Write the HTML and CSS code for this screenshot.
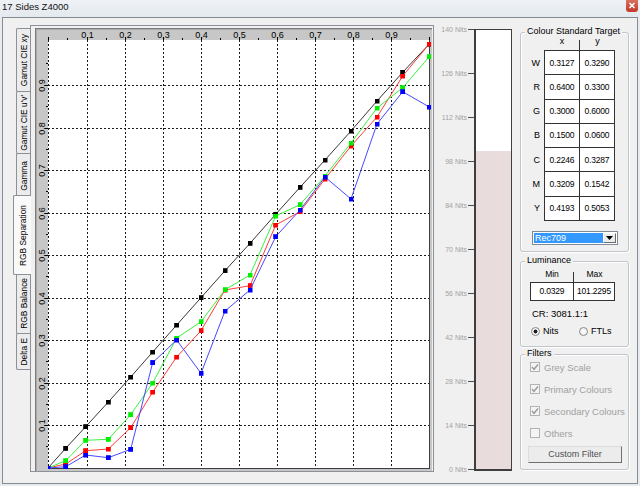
FILE: index.html
```html
<!DOCTYPE html>
<html>
<head>
<meta charset="utf-8">
<link rel="stylesheet" href="styles.css">
</head>
<body>
<div class="titlebar">
  <span class="title">17 Sides Z4000</span>
  <span class="close"><svg width="12" height="12" viewBox="0 0 12 12"><path class="close-x" d="M3.5 3 L8.5 8 M8.5 3 L3.5 8"/></svg></span>
</div>
<div class="window">
  <div class="tabs">
    <div class="tab t1"><span>Gamut CIE xy</span></div>
    <div class="tab t2"><span>Gamut CIE u'v'</span></div>
    <div class="tab t3"><span>Gamma</span></div>
    <div class="tab sel"><span>RGB Separation</span></div>
    <div class="tab t5"><span>RGB Balance</span></div>
    <div class="tab t6"><span>Delta E</span></div>
  </div>
  <div class="page">
    <svg class="chart" width="397" height="443" viewBox="0 0 397 443">
      <defs>
        <clipPath id="plot"><rect x="13" y="12" width="383" height="429"/></clipPath>
        <marker id="mk" markerWidth="5" markerHeight="5" refX="2.5" refY="2.5" markerUnits="userSpaceOnUse"><rect width="5" height="5" class="m-k"/></marker>
        <marker id="mr" markerWidth="5" markerHeight="5" refX="2.5" refY="2.5" markerUnits="userSpaceOnUse"><rect width="5" height="5" class="m-r"/></marker>
        <marker id="mg" markerWidth="5" markerHeight="5" refX="2.5" refY="2.5" markerUnits="userSpaceOnUse"><rect width="5" height="5" class="m-g"/></marker>
        <marker id="mb" markerWidth="5" markerHeight="5" refX="2.5" refY="2.5" markerUnits="userSpaceOnUse"><rect width="5" height="5" class="m-b"/></marker>
      </defs>
      <rect class="ruler" width="397" height="443"/>
      <path class="bevel1" d="M0 0.5H397M0.5 0V443"/>
      <path class="bevel2" d="M1 1.5H397M1.5 1V443"/>
      <rect class="plotbg" x="13" y="12" width="382" height="429"/>
      <path class="grid" d="M13.5 12V440M52.5 12V440M90.5 12V440M128.5 12V440M166.5 12V440M204.5 12V440M242.5 12V440M280.5 12V440M318.5 12V440M356.5 12V440"/>
      <path class="grid" d="M13 57.5H394M13 100.5H394M13 142.5H394M13 185.5H394M13 227.5H394M13 270.5H394M13 312.5H394M13 355.5H394M13 397.5H394"/>
      <path class="edge" d="M394.5 12V441M13 440.5H395"/>
      <path class="tick" d="M13.5 9V12M52.5 9V12M90.5 9V12M128.5 9V12M166.5 9V12M204.5 9V12M242.5 9V12M280.5 9V12M318.5 9V12M356.5 9V12M394.5 9V12M32.5 10V12M71.5 10V12M109.5 10V12M147.5 10V12M185.5 10V12M223.5 10V12M261.5 10V12M299.5 10V12M337.5 10V12M375.5 10V12"/>
      <path class="tick" d="M10 57.5H13M10 100.5H13M10 142.5H13M10 185.5H13M10 227.5H13M10 270.5H13M10 312.5H13M10 355.5H13M10 397.5H13M11 35.5H13M11 78.5H13M11 121.5H13M11 163.5H13M11 206.5H13M11 248.5H13M11 291.5H13M11 333.5H13M11 376.5H13M11 418.5H13"/>
      <g class="xl">
        <text x="52.5" y="10">0,1</text>
        <text x="90.5" y="10">0,2</text>
        <text x="128.5" y="10">0,3</text>
        <text x="166.5" y="10">0,4</text>
        <text x="204.5" y="10">0,5</text>
        <text x="242.5" y="10">0,6</text>
        <text x="280.5" y="10">0,7</text>
        <text x="318.5" y="10">0,8</text>
        <text x="356.5" y="10">0,9</text>
      </g>
      <g class="yl">
        <text transform="translate(10 57.5) rotate(-90)">0,9</text>
        <text transform="translate(10 100.5) rotate(-90)">0,8</text>
        <text transform="translate(10 142.5) rotate(-90)">0,7</text>
        <text transform="translate(10 185.5) rotate(-90)">0,6</text>
        <text transform="translate(10 227.5) rotate(-90)">0,5</text>
        <text transform="translate(10 270.5) rotate(-90)">0,4</text>
        <text transform="translate(10 312.5) rotate(-90)">0,3</text>
        <text transform="translate(10 355.5) rotate(-90)">0,2</text>
        <text transform="translate(10 397.5) rotate(-90)">0,1</text>
      </g>
      <g clip-path="url(#plot)">
        <polyline class="s-k" points="13,440 30.7,420.3 50.7,398.7 73.3,374 95.7,349 117.7,324 141.7,297 166,269.7 190,242.7 215,215.3 240.7,186.3 265,159.3 290,132 316,103 342,73 367.7,44.3 394.3,16"/>
        <polyline class="s-r" points="13,440 30.7,436 50.7,422.7 73.3,421 95.7,399.7 117.7,364 141.7,329 166,302.7 190,262 215,257.7 240.7,197 265,183.7 290,151 316,118 342,89 367.7,48 394.3,16"/>
        <polyline class="s-g" points="13,440 30.7,432.7 50.7,412.3 73.3,411.3 95.7,386.7 117.7,355 141.7,310 166,293.7 190,261.7 215,247 240.7,188 265,176.7 290,148 316,115 342,80 367.7,59.7 394.3,28.7"/>
        <polyline class="s-b" points="13,440 30.7,438.7 50.7,427 73.3,429.7 95.7,421.3 117.7,334.6 141.7,312 166,345.3 190,283 215,262 240.7,208.7 265,182 290,149 316,171 342,96 367.7,63.7 394.3,79"/>
      </g>
    </svg>
  </div>
  <div class="nits">
    <svg width="82" height="460" viewBox="0 0 82 460">
      <rect class="bar-border" x="40" y="11" width="38" height="442"/>
      <rect class="bar-empty" x="42" y="12" width="35" height="439"/>
      <rect class="bar-fill" x="42" y="133" width="35" height="318"/>
      <path class="ntick" d="M34 11.5H40M34 55.5H40M34 99.5H40M34 143.5H40M34 187.5H40M34 231.5H40M34 275.5H40M34 319.5H40M34 363.5H40M34 407.5H40M34 451.5H40"/>
      <g class="nl">
        <text x="33" y="14">140 Nits</text>
        <text x="33" y="58">126 Nits</text>
        <text x="33" y="102">112 Nits</text>
        <text x="33" y="146">98 Nits</text>
        <text x="33" y="190">84 Nits</text>
        <text x="33" y="234">70 Nits</text>
        <text x="33" y="278">56 Nits</text>
        <text x="33" y="322">42 Nits</text>
        <text x="33" y="366">28 Nits</text>
        <text x="33" y="410">14 Nits</text>
        <text x="33" y="454">0 Nits</text>
      </g>
    </svg>
  </div>
  <div class="side">
    <div class="group g-cst">
      <div class="legend">Colour Standard Target</div>
      <div class="cst-head"><span></span><span class="hx">x</span><span>y</span></div>
      <div class="cst-body">
        <div class="cst-labels"><span>W</span><span>R</span><span>G</span><span>B</span><span>C</span><span>M</span><span>Y</span></div>
        <div class="cst-grid">
          <span>0.3127</span><span>0.3290</span>
          <span>0.6400</span><span>0.3300</span>
          <span>0.3000</span><span>0.6000</span>
          <span>0.1500</span><span>0.0600</span>
          <span>0.2246</span><span>0.3287</span>
          <span>0.3209</span><span>0.1542</span>
          <span>0.4193</span><span>0.5053</span>
        </div>
      </div>
      <div class="select">
        <span class="sel-text">Rec709</span>
        <span class="sel-btn"><svg width="7" height="4" viewBox="0 0 7 4"><path class="arrow" d="M0 0H7L3.5 4Z"/></svg></span>
      </div>
    </div>
    <div class="group g-lum">
      <div class="legend">Luminance</div>
      <div class="lum-head"><span class="hx">Min</span><span>Max</span></div>
      <div class="lum-box"><span>0.0329</span><span>101.2295</span></div>
      <div class="cr">CR: 3081.1:1</div>
      <div class="radios">
        <div class="radio"><i class="on"></i><span>Nits</span></div>
        <div class="radio"><i></i><span>FTLs</span></div>
      </div>
    </div>
    <div class="group g-flt">
      <div class="legend">Filters</div>
      <div class="checks">
        <div class="check"><i><svg width="8" height="8" viewBox="0 0 8 8"><path class="tickmark" d="M1 4 L3 6.3 L7 1.5"/></svg></i><span>Grey Scale</span></div>
        <div class="check"><i><svg width="8" height="8" viewBox="0 0 8 8"><path class="tickmark" d="M1 4 L3 6.3 L7 1.5"/></svg></i><span>Primary Colours</span></div>
        <div class="check"><i><svg width="8" height="8" viewBox="0 0 8 8"><path class="tickmark" d="M1 4 L3 6.3 L7 1.5"/></svg></i><span>Secondary Colours</span></div>
        <div class="check"><i></i><span>Others</span></div>
      </div>
      <div class="btn">Custom Filter</div>
    </div>
  </div>
</div>
</body>
</html>
```
FILE: styles.css
```css
* { box-sizing: border-box; }
html, body { margin: 0; padding: 0; }
body {
  width: 640px; height: 486px; overflow: hidden;
  background: #e7ebf0;
  font-family: "Liberation Sans", Arial, sans-serif;
  font-size: 9px; color: #000;
}
.titlebar {
  height: 17px; display: flex; align-items: flex-start;
  background: linear-gradient(#eef1f5, #e4e9ef);
}
.title { font-size: 9.5px; line-height: 11px; padding: 1px 0 0 2px; color: #111; }
.close {
  margin-left: auto; margin-right: 2px; width: 12px; height: 12px;
  background: linear-gradient(#d9705f, #c2392a); border-radius: 0 0 3px 3px;
  display: flex;
}
.close-x { stroke: #fff; stroke-width: 1.6; fill: none; }

.window {
  margin-left: 2px; width: 636px; height: 467px;
  border: 1px solid #868b92; background: #f0f0f0;
  display: flex; align-items: flex-start;
}

/* tabs */
.tabs {
  width: 27px; flex: none; display: flex; flex-direction: column;
  align-items: flex-end; padding-top: 10px;
}
.tab {
  width: 14px; border: 1px solid #8c9097; border-right: 0; margin-bottom: -1px;
  background: #ececec; display: flex; align-items: center; justify-content: center;
  border-radius: 2px 0 0 2px; overflow: hidden;
}
.tab span {
  writing-mode: vertical-rl; transform: rotate(180deg);
  font-size: 8.4px; line-height: 10px; white-space: nowrap;
}
.t1 { height: 64px; }
.t2 { height: 63px; }
.t3 { height: 45px; }
.t5 { height: 62px; }
.t6 { height: 37px; }
.tab.sel {
  width: 18px; height: 80px; margin: -2px -1px -3px 0;
  background: #f9f9f9; position: relative; z-index: 1;
}

/* page / chart */
.page {
  width: 404px; height: 447px; margin-top: 7px; flex: none;
  border: 1px solid #8c9097; padding: 2px 1px 0 4px; background: #f0f0f0;
}
.chart { display: block; }
.ruler { fill: #c7c7c7; }
.bevel1 { stroke: #7c7c7c; fill: none; }
.bevel2 { stroke: #a9a9a9; fill: none; }
.plotbg { fill: #fff; }
.grid { fill: none; stroke: #1a1a1a; stroke-width: 1; stroke-dasharray: 2 2; }
.edge { fill: none; stroke: #3c3c3c; }
.tick { fill: none; stroke: #000; }
.xl text { font-size: 9px; text-anchor: middle; fill: #000; }
.yl text { font-size: 9px; text-anchor: middle; fill: #000; }
.s-k, .s-r, .s-g, .s-b { fill: none; stroke-width: 1; }
.s-k { stroke: #383838; marker-start: url(#mk); marker-mid: url(#mk); marker-end: url(#mk); }
.s-r { stroke: #ff3c3c; marker-start: url(#mr); marker-mid: url(#mr); marker-end: url(#mr); }
.s-g { stroke: #3cf03c; marker-start: url(#mg); marker-mid: url(#mg); marker-end: url(#mg); }
.s-b { stroke: #4848ff; marker-start: url(#mb); marker-mid: url(#mb); marker-end: url(#mb); }
.m-k { fill: #000; }
.m-r { fill: #f00; }
.m-g { fill: #00f000; }
.m-b { fill: #0000ff; }

/* nits bar */
.nits { width: 82px; flex: none; }
.nits svg { display: block; }
.bar-border { fill: #3e3e3e; }
.bar-empty { fill: #fff; }
.bar-fill { fill: #e8dcdc; }
.ntick { stroke: #4a4a4a; fill: none; }
.nl text { font-size: 7px; fill: #a2a2a2; text-anchor: end; }

/* side panel */
.side { width: 121px; flex: none; padding: 14px 0 0 4px; }
.group {
  width: 109px; border: 1px solid #bfc5cb; border-radius: 3px;
  box-shadow: inset 1px 1px 0 #fff, 1px 1px 0 #fff;
}
.legend {
  width: fit-content; margin: -7px 0 0 4px; padding: 0 2px;
  background: #f0f0f0; line-height: 11px; height: 11px; font-size: 9px;
}
.g-lum { margin-top: 9px; padding-bottom: 8px; }
.g-flt { margin-top: 7px; padding-bottom: 6px; }

.cst-head {
  display: grid; grid-template-columns: 23px 36px 35px;
  height: 13px; line-height: 9px; text-align: center; font-size: 9px;
}
.hx { background: linear-gradient(#333, #333) no-repeat right bottom / 1px 10px; }
.cst-body { display: flex; }
.cst-labels {
  width: 23px; display: grid; grid-auto-rows: 23.28px; row-gap: 1px;
  padding: 1px 4px 1px 0; text-align: right; align-items: center; font-size: 9px;
}
.cst-grid {
  width: 71px; display: grid; grid-template-columns: 34px 34px;
  grid-auto-rows: 23.28px; gap: 1px; padding: 1px; background: #333;
}
.cst-grid span, .lum-box span {
  background: #fff; display: flex; align-items: center; justify-content: center;
  font-size: 8.5px; letter-spacing: -0.2px;
}
.select {
  margin: 10px 0 6px 11px; width: 86px; height: 14px;
  border: 1px solid #7f8a96; background: #fff; display: flex; padding: 1px;
}
.sel-text {
  flex: 1; background: #3399ff; color: #fff; font-size: 9px;
  line-height: 10px; padding-left: 1px;
}
.sel-btn {
  width: 13px; border: 1px solid; border-color: #fff #6b6b6b #6b6b6b #fff;
  background: #ececec; display: flex; align-items: center; justify-content: center;
}
.arrow { fill: #000; }

.lum-head {
  display: grid; grid-template-columns: 44px 41px; margin-left: 9px;
  height: 16px; padding-top: 3px; line-height: 11px; text-align: center; font-size: 8.5px;
}
.lum-box {
  margin-left: 9px; width: 85px; display: grid; grid-template-columns: 42px 40px;
  grid-auto-rows: 17px; gap: 1px; padding: 1px; background: #333;
}
.cr { margin: 7px 0 0 11px; line-height: 11px; font-size: 9.5px; }
.radios { display: flex; margin: 6px 0 0 10px; height: 13px; align-items: center; }
.radio { display: flex; align-items: center; width: 48px; font-size: 9px; }
.radio i {
  width: 9px; height: 9px; border-radius: 50%; border: 1px solid #8a8a8a;
  background: radial-gradient(circle, #fff 0, #e6e6e6 100%); margin-right: 3px; flex: none;
}
.radio i.on { background: radial-gradient(circle, #1c1c1c 0 1.7px, #fff 2.3px, #e6e6e6 100%); }

.checks { margin-top: 2px; display: flex; flex-direction: column; gap: 9px; padding-left: 9px; }
.check { display: flex; align-items: center; height: 13px; color: #a0a0a0; font-size: 9.5px; }
.check i {
  width: 10px; height: 10px; border: 1px solid #b3b3b3; background: #f4f4f4;
  margin-right: 4px; display: flex; align-items: center; justify-content: center; flex: none;
}
.check i svg { display: block; }
.tickmark { fill: none; stroke: #9b9b9b; stroke-width: 1.4; }
.btn {
  margin: 6px 0 0 7px; width: 94px; height: 17px;
  border: 1px solid; border-color: #dcdcdc #6f6f6f #6f6f6f #dcdcdc;
  background: #ececec; display: flex; align-items: center; justify-content: center;
  color: #505050; font-size: 9px;
}
```
